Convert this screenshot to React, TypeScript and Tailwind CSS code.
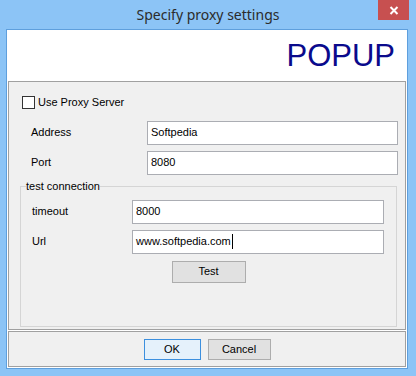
const ui = { fontFamily: '"Liberation Sans", Arial, sans-serif' };

function Field({ label, value, labelWidth, inputWidth, cursor }: { label: string; value: string; labelWidth: string; inputWidth: string; cursor?: boolean }) {
  return (
    <div className="flex items-center">
      <span className={`${labelWidth} text-[11px] text-black`}>{label}</span>
      <div className={`${inputWidth} flex h-[24px] items-center border border-[#abadb3] bg-white pl-[3px] text-[11px] text-black`}>
        {value}
        {cursor && <span className="ml-px inline-block h-[15px] w-px bg-black" />}
      </div>
    </div>
  );
}

export default function App() {
  return (
    <div className="flex h-[376px] w-[416px] flex-col bg-[#8cc4f6]" style={ui}>
      <div className="relative flex h-[29px] items-center justify-center">
        <span className="text-[14px] text-[#2b2b2b]" style={{ fontFamily: '"Noto Sans", "Open Sans", sans-serif' }}>
          Specify proxy settings
        </span>
        <div className="absolute right-[7px] top-0 flex h-[20px] w-[31px] items-center justify-center bg-[#c75050]">
          <svg width="10" height="9" viewBox="0 0 10 9">
            <path d="M1.5 1 L8.5 8 M8.5 1 L1.5 8" stroke="#fff" strokeWidth="2" />
          </svg>
        </div>
      </div>

      <div className="ml-[6px] flex h-[340px] w-[402px] flex-col border border-[#5e9fdd] bg-white">
        <div className="flex h-[51px] items-center justify-end pr-[12px]">
          <span className="text-[31px] leading-none text-[#0a0a8c]">POPUP</span>
        </div>

        <div className="mx-px flex h-[249px] flex-col border border-[#a0a0a0] bg-[#f0f0f0] pl-[13px] pt-[12px]">
          <label className="flex items-center gap-[3px]">
            <span className="h-[13px] w-[13px] border border-[#333] bg-white" />
            <span className="text-[11px] text-black">Use Proxy Server</span>
          </label>

          <div className="mt-[10px] flex flex-col gap-[6px] pl-[9px]">
            <Field label="Address" value="Softpedia" labelWidth="w-[116px]" inputWidth="w-[251px]" />
            <Field label="Port" value="8080" labelWidth="w-[116px]" inputWidth="w-[251px]" />
          </div>

          <fieldset className="-ml-[2px] mt-[5px] h-[147px] w-[377px] border border-[#d5d5d5]">
            <legend className="ml-[5px] text-[11px] leading-[13px] text-black">test connection</legend>
            <div className="flex flex-col pl-[11px] pt-[7px]">
              <Field label="timeout" value="8000" labelWidth="w-[100px]" inputWidth="w-[252px]" />
              <div className="mt-[6px]">
                <Field label="Url" value="www.softpedia.com" labelWidth="w-[100px]" inputWidth="w-[252px]" cursor />
              </div>
              <div className="mt-[7px] flex justify-center pr-[11px]">
                <button className="h-[22px] w-[74px] border border-[#adadad] bg-[#e1e1e1] text-[11px] text-black">Test</button>
              </div>
            </div>
          </fieldset>
        </div>

        <div className="mx-px mt-px flex h-[36px] justify-center gap-[7px] border border-[#a0a0a0] bg-[#f0f0f0] pt-[7px]">
          <button className="h-[21px] w-[57px] border border-[#3c8fde] bg-[#e5f1fb] text-[11px] text-black">OK</button>
          <button className="h-[21px] w-[63px] border border-[#adadad] bg-[#e1e1e1] text-[11px] text-black">Cancel</button>
        </div>
      </div>
    </div>
  );
}
